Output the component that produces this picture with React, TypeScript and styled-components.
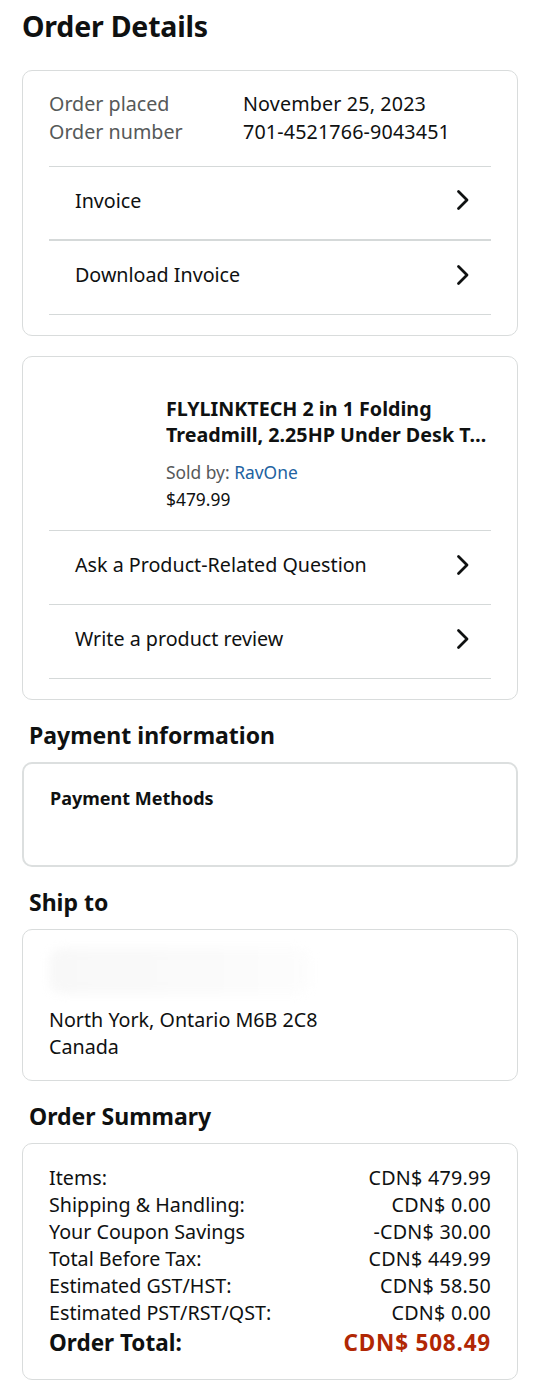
import React from "react";
import styled, { createGlobalStyle } from "styled-components";

const Global = createGlobalStyle`
  html, body { margin: 0; padding: 0; background: #ffffff; }
  body { font-family: "Noto Sans", "Open Sans", Arial, sans-serif; color: #0f1111; }
  * { box-sizing: border-box; }
`;

const Page = styled.div`
  width: 540px;
  padding: 8px 22px 8px 22px;
  display: flex;
  flex-direction: column;
`;

const Title = styled.h1`
  margin: 0 0 26px 0;
  font-size: 28.5px;
  font-weight: 700;
  line-height: 36px;
  letter-spacing: -0.2px;
`;

const Heading = styled.h2`
  margin: 0 0 12px 7px;
  font-size: 23px;
  font-weight: 700;
  line-height: 30px;
`;

const Card = styled.div<{ $thick?: boolean; $pad?: string; $mb?: number }>`
  border: ${(p) => (p.$thick ? "2.5px solid #dcdfdf" : "1.5px solid #d9dcdc")};
  border-radius: 10px;
  padding: ${(p) => p.$pad || "0 26px 20px 26px"};
  margin-bottom: ${(p) => p.$mb ?? 20}px;
  display: flex;
  flex-direction: column;
`;

const InfoGrid = styled.div`
  display: grid;
  grid-template-columns: 194px 1fr;
  padding: 19px 0 20px 0;
  font-size: 19.7px;
  line-height: 28px;
  border-bottom: 1.5px solid #d5d9d9;
`;

const Label = styled.span`
  color: #565959;
`;

const Value = styled.span`
  color: #0f1111;
  letter-spacing: 0.15px;
`;

const LinkRow = styled.div<{ $heavy?: boolean }>`
  display: flex;
  align-items: center;
  justify-content: space-between;
  height: 74px;
  padding: 0 20px 6px 26px;
  font-size: 19.7px;
  border-bottom: ${(p) => (p.$heavy ? "2.5px solid #d5d9d9" : "1.5px solid #d5d9d9")};
`;

const Chevron = () => (
  <svg width="16" height="22" viewBox="0 0 16 22" fill="none">
    <path d="M3.5 2.5l8.5 8.5-8.5 8.5" stroke="#0f1111" strokeWidth="2.8" strokeLinecap="round" strokeLinejoin="round" />
  </svg>
);

const Product = styled.div`
  display: flex;
  padding: 39px 0 18px 0;
  border-bottom: 1.5px solid #d5d9d9;
`;

const Thumb = styled.div`
  width: 117px;
  flex-shrink: 0;
`;

const ProductInfo = styled.div`
  display: flex;
  flex-direction: column;
  min-width: 0;
  flex: 1;
`;

const TitleLine = styled.div<{ $clip?: boolean }>`
  font-size: 19.7px;
  font-weight: 700;
  line-height: 26px;
  white-space: nowrap;
  overflow: hidden;
  text-overflow: ${(p) => (p.$clip ? "ellipsis" : "clip")};
`;

const TitleBlock = styled.div`
  display: flex;
  flex-direction: column;
  margin-bottom: 11px;
`;

const Small = styled.div`
  font-size: 17.4px;
  line-height: 27px;
  color: #565959;
`;

const Seller = styled.span`
  color: #2162a1;
`;

const Price = styled.div`
  font-size: 17.4px;
  line-height: 26px;
  color: #0f1111;
`;

const PayTitle = styled.div`
  font-size: 18px;
  font-weight: 700;
  line-height: 26px;
  padding-left: 26px;
`;

const Address = styled.div`
  display: flex;
  flex-direction: column;
  font-size: 19.7px;
  line-height: 27px;
`;

const Redacted = styled.div`
  height: 46px;
  width: 262px;
  margin: 0 0 12px 0;
  background: linear-gradient(90deg, #f8f8f8, #fafafa 60%, #fdfdfd);
  border-radius: 14px;
  filter: blur(5px);
`;

const SummaryRow = styled.div`
  display: flex;
  justify-content: space-between;
  font-size: 19.7px;
  line-height: 27px;
`;

const Amount = styled.span`
  letter-spacing: 0.25px;
`;

const TotalRow = styled.div`
  display: flex;
  justify-content: space-between;
  font-size: 22.5px;
  font-weight: 700;
  line-height: 30px;
  margin-top: 1.5px;
`;

const TotalValue = styled.span`
  color: #b12704;
  letter-spacing: 0.8px;
`;

const summary: [string, string][] = [
  ["Items:", "CDN$ 479.99"],
  ["Shipping & Handling:", "CDN$ 0.00"],
  ["Your Coupon Savings", "-CDN$ 30.00"],
  ["Total Before Tax:", "CDN$ 449.99"],
  ["Estimated GST/HST:", "CDN$ 58.50"],
  ["Estimated PST/RST/QST:", "CDN$ 0.00"],
];

export default function App() {
  return (
    <>
      <Global />
      <Page>
        <Title>Order Details</Title>

        <Card>
          <InfoGrid>
            <Label>Order placed</Label>
            <Value>November 25, 2023</Value>
            <Label>Order number</Label>
            <Value>701-4521766-9043451</Value>
          </InfoGrid>
          <LinkRow $heavy>
            <span>Invoice</span>
            <Chevron />
          </LinkRow>
          <LinkRow>
            <span>Download Invoice</span>
            <Chevron />
          </LinkRow>
        </Card>

        <Card>
          <Product>
            <Thumb />
            <ProductInfo>
              <TitleBlock>
                <TitleLine>FLYLINKTECH 2 in 1 Folding</TitleLine>
                <TitleLine $clip>Treadmill, 2.25HP Under Desk Treadmill with Remote Control</TitleLine>
              </TitleBlock>
              <Small>
                Sold by: <Seller>RavOne</Seller>
              </Small>
              <Price>$479.99</Price>
            </ProductInfo>
          </Product>
          <LinkRow>
            <span>Ask a Product-Related Question</span>
            <Chevron />
          </LinkRow>
          <LinkRow>
            <span>Write a product review</span>
            <Chevron />
          </LinkRow>
        </Card>

        <Heading>Payment information</Heading>
        <Card $thick $pad="21px 0 54px 0">
          <PayTitle>Payment Methods</PayTitle>
        </Card>

        <Heading>Ship to</Heading>
        <Card $pad="18px 26px 20px 26px">
          <Address>
            <Redacted />
            <span>North York, Ontario M6B 2C8</span>
            <span>Canada</span>
          </Address>
        </Card>

        <Heading>Order Summary</Heading>
        <Card $pad="20px 26px 21px 26px" $mb={8}>
          {summary.map(([k, v]) => (
            <SummaryRow key={k}>
              <span>{k}</span>
              <Amount>{v}</Amount>
            </SummaryRow>
          ))}
          <TotalRow>
            <span>Order Total:</span>
            <TotalValue>CDN$ 508.49</TotalValue>
          </TotalRow>
        </Card>
      </Page>
    </>
  );
}
